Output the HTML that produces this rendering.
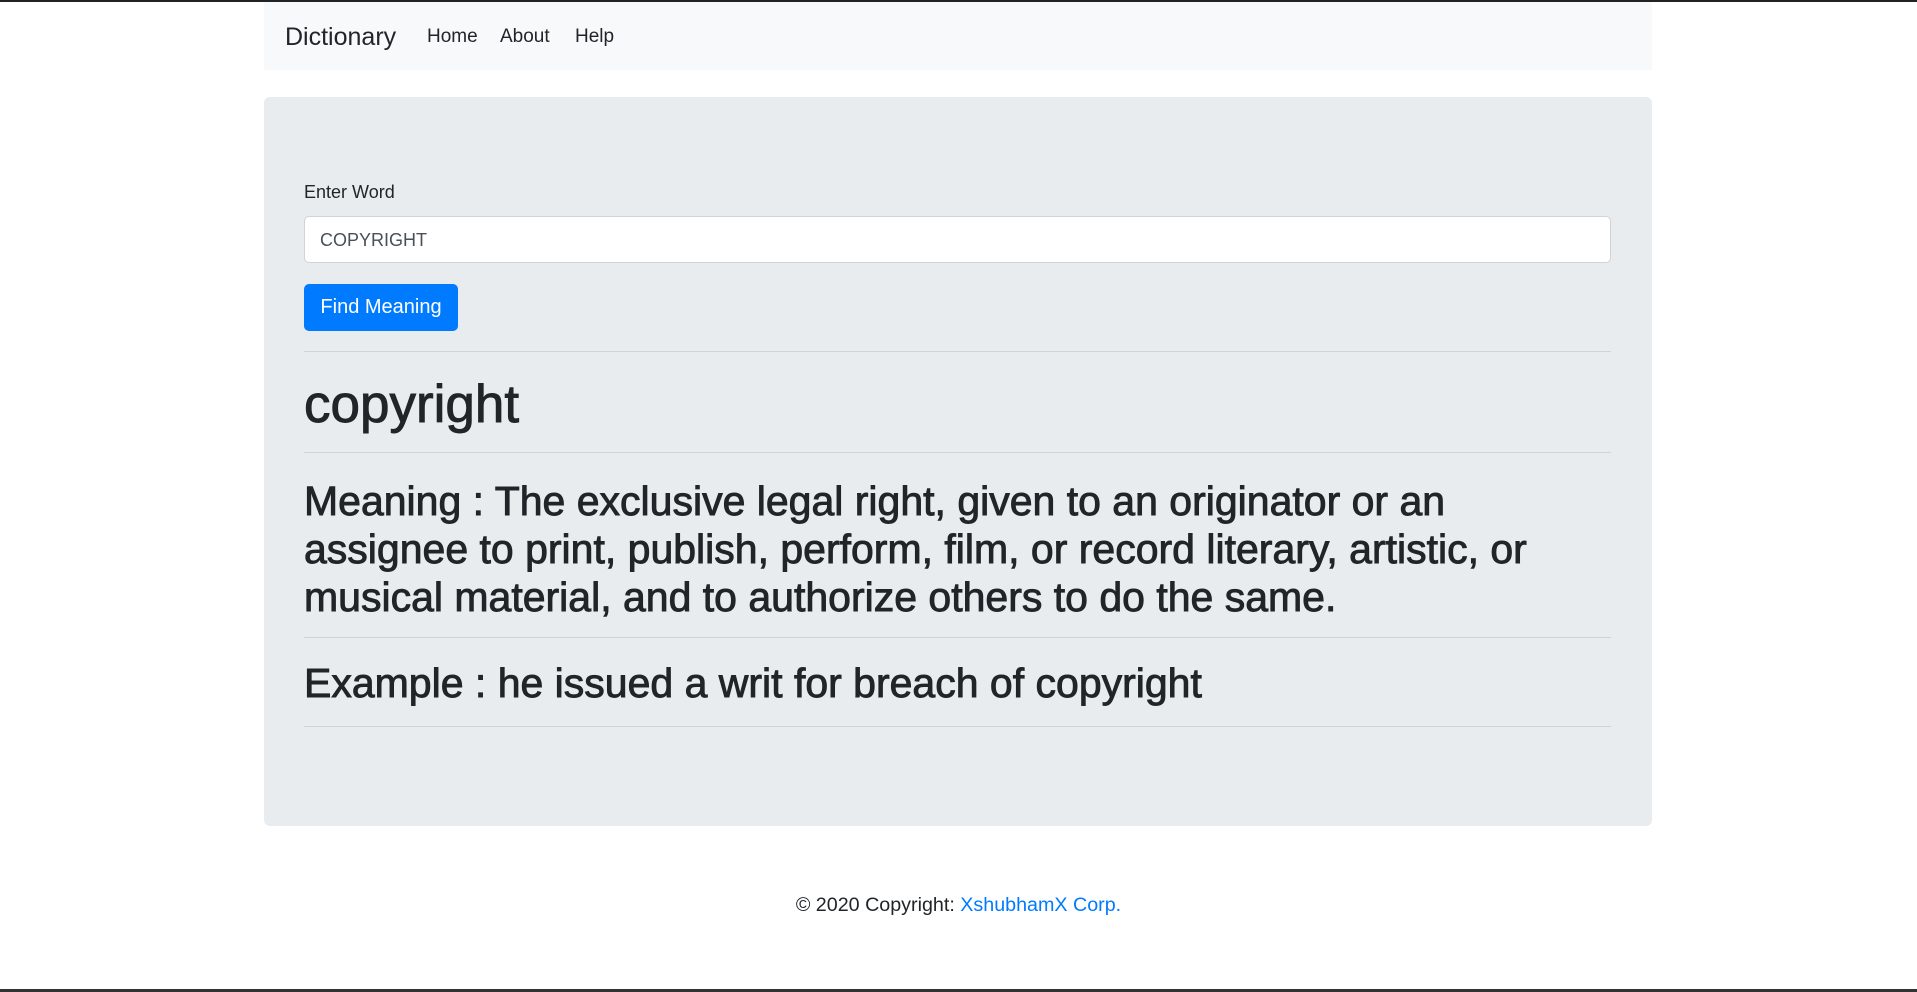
<!DOCTYPE html>
<html><head><meta charset="utf-8"><style>
*{box-sizing:border-box;margin:0;padding:0}
body{width:1917px;height:992px;position:relative;background:#fff;font-family:"Liberation Sans",sans-serif;color:#212529;overflow:hidden}
.a{position:absolute;white-space:nowrap}
.topline{left:0;top:0;width:1917px;height:2px;background:#222}
.botline{left:0;top:989px;width:1917px;height:3px;background:#333}
.nav{left:264px;top:2px;width:1388px;height:68px;background:#f8f9fa}
.jum{left:264px;top:97px;width:1388px;height:729px;background:#e9ecef;border-radius:6px}
.hr{left:304px;width:1307px;height:1px;background:rgba(0,0,0,.1)}
.t{-webkit-text-stroke:0.9px #212529}
</style></head><body>
<div class="a topline"></div>
<div class="a nav"></div>
<div class="a" style="left:285px;top:22px;font-size:25px;line-height:30px">Dictionary</div>
<div class="a" style="left:427px;top:25px;font-size:19px;line-height:24px">Home</div>
<div class="a" style="left:500px;top:25px;font-size:19px;line-height:24px">About</div>
<div class="a" style="left:575px;top:25px;font-size:19px;line-height:24px">Help</div>
<div class="a jum"></div>
<div class="a" style="left:304px;top:180px;font-size:18px;line-height:24px">Enter Word</div>
<div class="a" style="left:304px;top:216px;width:1307px;height:47px;background:#fff;border:1px solid #ced4da;border-radius:5px"></div>
<div class="a" style="left:320px;top:228px;font-size:18px;line-height:24px;color:#495057">COPYRIGHT</div>
<div class="a" style="left:304px;top:284px;width:154px;height:47px;background:#007bff;border-radius:5px;color:#fff;font-size:20px;line-height:47px;text-align:center">Find Meaning</div>
<div class="a hr" style="top:351px"></div>
<div class="a t" style="left:304px;top:374px;font-size:53px;line-height:62px">copyright</div>
<div class="a hr" style="top:452px"></div>
<div class="a t" style="left:304px;top:477px;font-size:41px;line-height:48px">Meaning : The exclusive legal right, given to an originator or an<br>assignee to print, publish, perform, film, or record literary, artistic, or<br>musical material, and to authorize others to do the same.</div>
<div class="a hr" style="top:637px"></div>
<div class="a t" style="left:304px;top:659px;font-size:41px;line-height:48px">Example : he issued a writ for breach of copyright</div>
<div class="a hr" style="top:726px"></div>
<div class="a" style="left:0;width:1917px;top:892px;text-align:center;font-size:19.7px;line-height:26px">© 2020 Copyright: <span style="color:#007bff">XshubhamX Corp.</span></div>
<div class="a botline"></div>
</body></html>
